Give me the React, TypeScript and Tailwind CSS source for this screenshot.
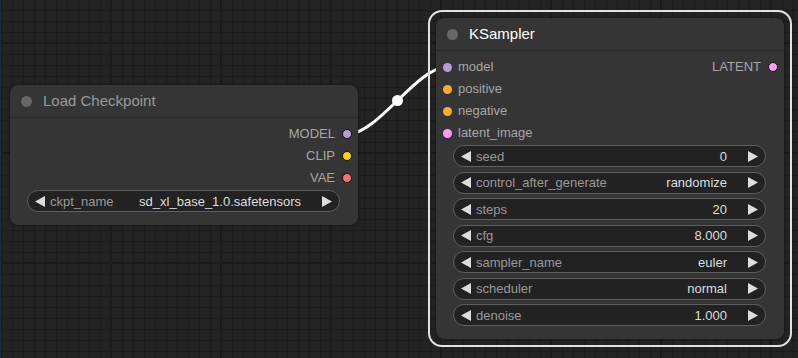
import React from "react"

type Slot = { name: string; color: string }

const FONT = "font-['Liberation_Sans',Arial,sans-serif]"

function ArrowLeft() {
  return (
    <svg width="10" height="11" viewBox="0 0 10 11" className="shrink-0">
      <polygon points="10,0 10,11 0,5.5" fill="#dddddd" />
    </svg>
  )
}

function ArrowRight() {
  return (
    <svg width="10" height="11" viewBox="0 0 10 11" className="shrink-0">
      <polygon points="0,0 0,11 10,5.5" fill="#dddddd" />
    </svg>
  )
}

function Widget({ label, value }: { label: string; value: string }) {
  return (
    <div className="flex items-center h-[22px] rounded-full bg-[#222222] border border-[#5e5e5e] pl-[7px] pr-[7px] text-[13px] leading-none">
      <ArrowLeft />
      <span className="ml-[5px] text-[#999999]">{label}</span>
      <span className="ml-auto mr-[21px] text-[#dddddd]">{value}</span>
      <ArrowRight />
    </div>
  )
}

function Dot({ color, ring }: { color: string; ring?: boolean }) {
  return (
    <span
      className={
        ring
          ? "block w-[10px] h-[10px] rounded-full border border-[#151515] shrink-0"
          : "block w-[9px] h-[9px] rounded-full shrink-0"
      }
      style={{ backgroundColor: color }}
    />
  )
}

function NodeTitle({ title, selected }: { title: string; selected?: boolean }) {
  return (
    <div className="flex items-center h-[33px] border-b border-[#2a2a2a] pl-[11px]">
      <span className="block w-[11px] h-[11px] rounded-full bg-[#676767]" />
      <span className={`ml-[11px] text-[15px] ${selected ? "text-white" : "text-[#9a9a9a]"}`}>{title}</span>
    </div>
  )
}

function Node({
  title,
  inputs,
  outputs,
  widgets,
  selected,
}: {
  title: string
  inputs: Slot[]
  outputs: Slot[]
  widgets: [string, string][]
  selected?: boolean
}) {
  const rows = Math.max(inputs.length, outputs.length)
  return (
    <div className={`w-[348px] rounded-[8px] bg-[#353535] shadow-[0_0_3px_rgba(0,0,0,0.6)] ${FONT}`}>
      <NodeTitle title={title} selected={selected} />
      <div className="pt-[5px] text-[13px]">
        {Array.from({ length: rows }).map((_, i) => (
          <div key={i} className="flex items-center h-[22px]">
            {inputs[i] ? (
              <div className="flex items-center pl-[7px]">
                <Dot color={inputs[i].color} />
                <span className="ml-[6px] text-[#a6a6a6]">{inputs[i].name}</span>
              </div>
            ) : null}
            {outputs[i] ? (
              <div className="flex items-center ml-auto pr-[6px]">
                <span className="mr-[7px] text-[#a6a6a6]">{outputs[i].name}</span>
                <Dot color={outputs[i].color} ring />
              </div>
            ) : null}
          </div>
        ))}
      </div>
      <div className="flex flex-col gap-[4.5px] mt-[1px] pl-[17px] pr-[18px] pb-[13px]">
        {widgets.map(([l, v]) => (
          <Widget key={l} label={l} value={v} />
        ))}
      </div>
    </div>
  )
}

export default function App() {
  return (
    <div className="relative w-[798px] h-[358px] overflow-hidden border-l border-[#1f2640] bg-[#232323] bg-[image:linear-gradient(to_right,#1c1c1c_1px,transparent_1px),linear-gradient(to_bottom,#1c1c1c_1px,transparent_1px),linear-gradient(to_right,#191919_2px,transparent_2px),linear-gradient(to_bottom,#191919_2px,transparent_2px)] bg-[size:11px_11px,11px_11px,110px_110px,110px_110px] bg-[position:0px_10px,0px_10px,-1px_42px,-1px_42px]">
      <svg className="absolute left-0 top-0" width="798" height="358">
        <path d="M347 134 C 377 134, 416 67, 446 67" stroke="#ffffff" strokeWidth="3" fill="none" />
        <circle cx="396.5" cy="100.5" r="5.5" fill="#ffffff" />
      </svg>

      <div className="absolute left-[9px] top-[85px]">
        <Node
          title="Load Checkpoint"
          inputs={[]}
          outputs={[
            { name: "MODEL", color: "#b39ddb" },
            { name: "CLIP", color: "#ffd500" },
            { name: "VAE", color: "#ff6e6e" },
          ]}
          widgets={[["ckpt_name", "sd_xl_base_1.0.safetensors"]]}
        />
      </div>

      <div className="absolute left-[427px] top-[10px] p-[6px] rounded-[14px] border-2 border-[#e2e2e2]">
        <Node
          title="KSampler"
          selected
          inputs={[
            { name: "model", color: "#b39ddb" },
            { name: "positive", color: "#ffa931" },
            { name: "negative", color: "#ffa931" },
            { name: "latent_image", color: "#ff9cf9" },
          ]}
          outputs={[{ name: "LATENT", color: "#ff9cf9" }]}
          widgets={[
            ["seed", "0"],
            ["control_after_generate", "randomize"],
            ["steps", "20"],
            ["cfg", "8.000"],
            ["sampler_name", "euler"],
            ["scheduler", "normal"],
            ["denoise", "1.000"],
          ]}
        />
      </div>
    </div>
  )
}
